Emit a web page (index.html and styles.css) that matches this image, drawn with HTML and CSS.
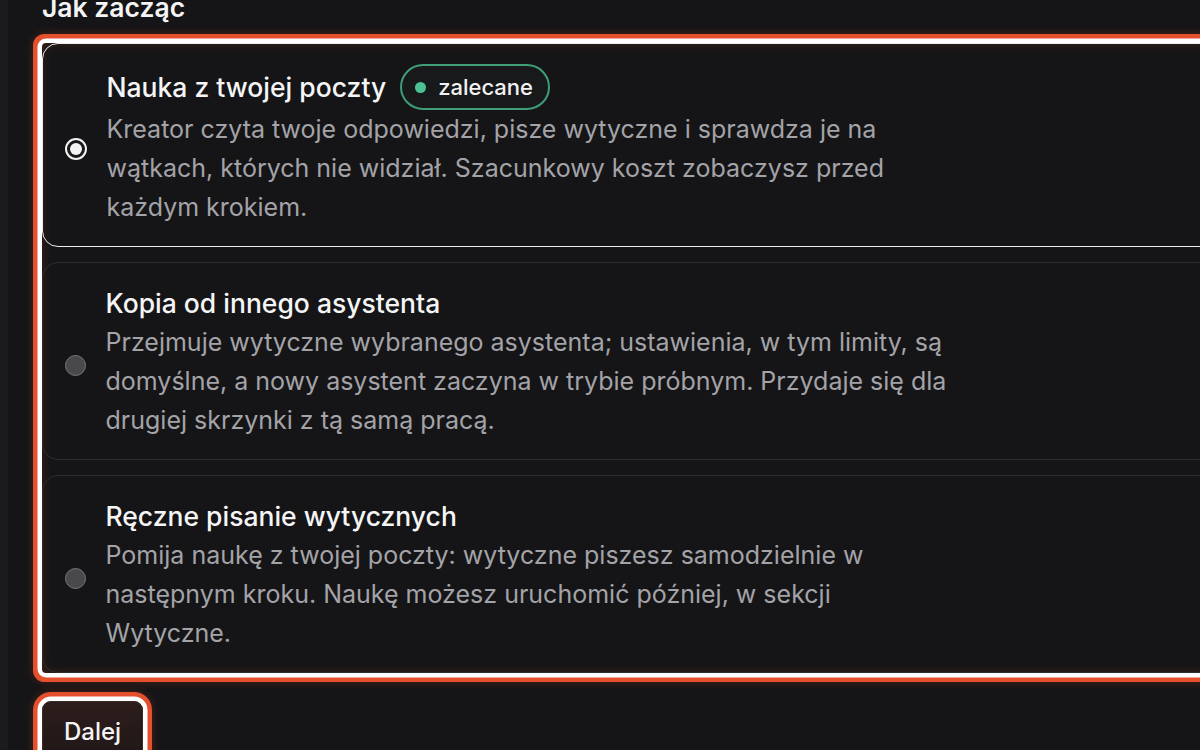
FILE: index.html
```html
<!DOCTYPE html>
<html lang="pl">
<head>
<meta charset="utf-8">
<title>Jak zacząć</title>
<link rel="stylesheet" href="styles.css">
</head>
<body>
<div class="layout">
  <div class="rail"></div>
  <main class="main">
    <h2 class="heading">Jak zacząć</h2>
    <div class="group" role="radiogroup">
      <label class="option option--selected">
        <span class="radio radio--checked"><span class="radio-dot"></span></span>
        <span class="option-body">
          <span class="option-title-row">
            <span class="option-title">Nauka z twojej poczty</span>
            <span class="badge"><span class="badge-dot"></span>zalecane</span>
          </span>
          <span class="option-desc">Kreator czyta twoje odpowiedzi, pisze wytyczne i sprawdza je na wątkach, których nie widział. Szacunkowy koszt zobaczysz przed każdym krokiem.</span>
        </span>
      </label>
      <label class="option">
        <span class="radio"></span>
        <span class="option-body">
          <span class="option-title-row">
            <span class="option-title">Kopia od innego asystenta</span>
          </span>
          <span class="option-desc">Przejmuje wytyczne wybranego asystenta; ustawienia, w tym limity, są domyślne, a nowy asystent zaczyna w trybie próbnym. Przydaje się dla drugiej skrzynki z tą samą pracą.</span>
        </span>
      </label>
      <label class="option">
        <span class="radio"></span>
        <span class="option-body">
          <span class="option-title-row">
            <span class="option-title">Ręczne pisanie wytycznych</span>
          </span>
          <span class="option-desc">Pomija naukę z twojej poczty: wytyczne piszesz samodzielnie w następnym kroku. Naukę możesz uruchomić później, w sekcji Wytyczne.</span>
        </span>
      </label>
    </div>
    <div class="actions">
      <button class="btn-next" type="button">Dalej</button>
    </div>
  </main>
</div>
</body>
</html>
```
FILE: styles.css
```css
* { box-sizing: border-box; }
html, body {
  margin: 0;
  height: 100%;
  background: #151517;
  overflow: hidden;
}
body {
  font-family: Inter, "Noto Sans", "DejaVu Sans", sans-serif;
  color: #f4f4f5;
}
.layout {
  display: flex;
  height: 100%;
}
.rail {
  width: 8px;
  flex: none;
  background: #1b1b1e;
}
.main {
  flex: 1;
  padding-left: 34px;
  min-width: 0;
}
.heading {
  margin: -9.5px 0 20px;
  font-size: 26.5px;
  line-height: 32px;
  font-weight: 600;
  color: #f4f4f5;
}
.group {
  display: flex;
  flex-direction: column;
  gap: 15px;
  width: 1200px;
  border-radius: 4px;
  background: #151517;
  box-shadow:
    0 0 0 4.5px #ffffff,
    0 0 0 9px #e4502d,
    0 0 10px 9px rgba(228, 80, 45, 0.25),
    inset 0 0 12px rgba(228, 80, 45, 0.22);
}
.option {
  display: flex;
  align-items: center;
  gap: 20px;
  padding: 21px 24px 19px 21.5px;
  border: 1px solid #2c2c30;
  border-radius: 16px;
  background: transparent;
  cursor: pointer;
}
.option--selected {
  border: 1.5px solid #ececec;
  padding-top: 20.5px;
}
.radio {
  flex: none;
  width: 21px;
  height: 21px;
  margin-top: 6px;
  border-radius: 50%;
  background: #49494c;
  border: 1.5px solid #77777b;
  display: flex;
  align-items: center;
  justify-content: center;
}
.radio--checked {
  width: 22px;
  height: 22px;
  background: #1a1a1c;
  border: 2px solid #f2f2f2;
}
.radio-dot {
  width: 12px;
  height: 12px;
  border-radius: 50%;
  background: #f4f4f4;
}
.option-body {
  display: flex;
  flex-direction: column;
  min-width: 0;
}
.option-title-row {
  display: flex;
  align-items: center;
  gap: 14px;
  min-height: 39px;
}
.option-title {
  font-size: 26.5px;
  line-height: 39px;
  font-weight: 500;
  color: #f5f5f6;
}
.badge {
  display: inline-flex;
  align-items: center;
  gap: 12px;
  height: 46px;
  padding: 0 15px 0 13px;
  border: 2px solid #3f9d78;
  border-radius: 23px;
  background: #17191a;
  font-size: 22px;
  font-weight: 500;
  color: #f2f2f2;
}
.badge-dot {
  width: 11px;
  height: 11px;
  border-radius: 50%;
  background: #4cc294;
}
.option-desc {
  max-width: 845px;
  font-size: 25px;
  line-height: 39px;
  color: #a3a3a8;
}
.actions {
  margin-top: 28px;
}
.btn-next {
  display: inline-flex;
  align-items: center;
  height: 60px;
  padding: 0 21px 0 21px;
  font-family: inherit;
  font-size: 24px;
  font-weight: 500;
  color: #f4f4f5;
  border: 1px solid #3a2a28;
  border-radius: 9px;
  background: linear-gradient(#2e1e1c, #1f1716);
  box-shadow:
    0 0 0 4.5px #ffffff,
    0 0 0 9px #e4502d,
    0 0 10px 9px rgba(228, 80, 45, 0.25);
  cursor: pointer;
}
```
